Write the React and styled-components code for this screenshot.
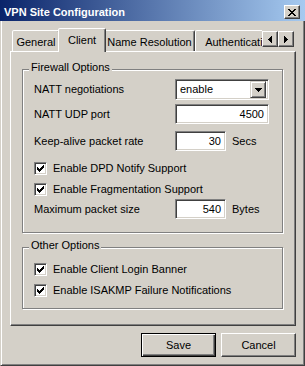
import React from 'react'
import styled, { createGlobalStyle } from 'styled-components'

const GlobalStyle = createGlobalStyle`
  html, body { margin: 0; padding: 0; background: #d4d0c8; }
  body {
    font-family: "Liberation Sans", Arial, sans-serif;
    font-size: 11px;
    color: #000;
  }
  * { box-sizing: border-box; }
`;

const Window = styled.div`
  width: 305px;
  height: 366px;
  display: flex;
  flex-direction: column;
  background: #d4d0c8;
  overflow: hidden;
`;

const TitleBar = styled.div`
  height: 21px;
  flex: none;
  display: flex;
  align-items: center;
  padding: 3px 5px 0 4px;
  background: linear-gradient(to right, #0a246a, #a6caf0);
`;

const Title = styled.div`
  flex: 1;
  color: #fff;
  font-weight: bold;
  line-height: 13px;
`;

const Raised = styled.div`
  display: flex;
  align-items: center;
  justify-content: center;
  background: #d4d0c8;
  border: 1px solid;
  border-color: #fff #404040 #404040 #fff;
  box-shadow: inset -1px -1px #808080;
`;

const CaptionButton = styled(Raised)`
  width: 16px;
  height: 14px;
`;

const Body = styled.div`
  flex: 1;
  display: flex;
  flex-direction: column;
  padding: 7px 8px 8px 9px;
  border-left: 1px solid #d4d0c8;
  border-right: 1px solid #404040;
  border-bottom: 1px solid #404040;
  box-shadow: inset 1px 0 #fff, inset -1px -1px #808080;
`;

const TabStrip = styled.div`
  height: 24px;
  flex: none;
  display: flex;
  position: relative;
  z-index: 1;
`;

const TabViewport = styled.div`
  flex: 1;
  display: flex;
  align-items: flex-end;
  overflow: hidden;
  padding-left: 2px;
`;

const Tab = styled.div`
  flex: none;
  width: ${p => p.$w + (p.$active ? 4 : 0)}px;
  height: ${p => (p.$active ? 24 : 21)}px;
  margin: ${p => (p.$active ? '0 -2px' : '0 0 1px 0')};
  position: relative;
  z-index: ${p => (p.$active ? 2 : 1)};
  padding-top: 5px;
  line-height: 13px;
  text-align: center;
  white-space: nowrap;
  background: #d4d0c8;
  border: 1px solid;
  border-bottom: none;
  border-color: #fff #404040 transparent #fff;
  border-radius: 2px 2px 0 0;
  box-shadow: inset -1px 0 #808080;
`;

const ScrollArrows = styled.div`
  flex: none;
  display: flex;
  margin: 3px 2px 0 0;
  align-self: flex-start;
`;

const ArrowButton = styled(Raised)`
  width: 16px;
  height: 16px;
`;

const TabPanel = styled.div`
  flex: 1;
  margin-top: -1px;
  display: flex;
  flex-direction: column;
  padding: 17px 12px 0 11px;
  border: 1px solid;
  border-color: #fff #404040 #404040 #fff;
  box-shadow: inset -1px -1px #808080;
`;

const GroupBox = styled.div`
  position: relative;
  display: flex;
  flex-direction: column;
  padding: ${p => p.$pad};
  margin-top: ${p => p.$mt || 0}px;
  border: 1px solid #808080;
  box-shadow: inset 1px 1px #fff, 1px 1px #fff;
`;

const Legend = styled.span`
  position: absolute;
  top: -9px;
  left: 6px;
  padding: 0 2px;
  line-height: 13px;
  background: #d4d0c8;
`;

const Row = styled.div`
  display: flex;
  align-items: center;
  height: ${p => p.$h}px;
  margin-top: ${p => p.$mt || 0}px;
  line-height: 13px;
`;

const Label = styled.span`
  width: 141px;
  flex: none;
`;

const Unit = styled.span`
  margin-left: 6px;
`;

const Sunken = styled.div`
  background: #fff;
  border: 1px solid;
  border-color: #808080 #fff #fff #808080;
  box-shadow: inset 1px 1px #404040, inset -1px -1px #d4d0c8;
`;

const TextField = styled(Sunken)`
  width: ${p => p.$w}px;
  height: 20px;
  padding: 0 4px;
  display: flex;
  align-items: center;
  justify-content: flex-end;
`;

const Combo = styled(Sunken)`
  width: 94px;
  height: 21px;
  padding: 2px;
  display: flex;
  align-items: center;
`;

const ComboText = styled.span`
  flex: 1;
  padding-left: 2px;
`;

const ComboButton = styled.div`
  width: 16px;
  height: 17px;
  display: flex;
  align-items: center;
  justify-content: center;
  background: #d4d0c8;
  border: 1px solid;
  border-color: #d4d0c8 #404040 #404040 #d4d0c8;
  box-shadow: inset 1px 1px #fff, inset -1px -1px #808080;
`;

const CheckRow = styled(Row)`
  gap: 6px;
`;

const CheckBox = styled(Sunken)`
  width: 13px;
  height: 13px;
  flex: none;
  display: flex;
  align-items: center;
  justify-content: center;
`;

const ButtonRow = styled.div`
  flex: none;
  display: flex;
  justify-content: flex-end;
  gap: 5px;
  margin-top: 7px;
`;

const PushButton = styled.div`
  width: 75px;
  height: 24px;
  display: flex;
  align-items: center;
  justify-content: center;
  background: #d4d0c8;
  border: 1px solid;
  border-color: ${p => (p.$default ? '#000' : '#fff #404040 #404040 #fff')};
  box-shadow: ${p =>
    p.$default
      ? 'inset 1px 1px #fff, inset -1px -1px #404040, inset -2px -2px #808080'
      : 'inset -1px -1px #808080'};
`;

const Pixels = ({ w, h, d }) => (
  <svg width={w} height={h} viewBox={`0 0 ${w} ${h}`} shapeRendering="crispEdges" style={{ display: 'block' }}>
    <path d={d} fill="#000" />
  </svg>
);

const CHECK = 'M0 2h1v3H0z M1 3h1v3H1z M2 4h1v3H2z M3 3h1v3H3z M4 2h1v3H4z M5 1h1v3H5z M6 0h1v3H6z';
const CROSS =
  'M0 0h2v1H0z M6 0h2v1H6z M1 1h2v1H1z M5 1h2v1H5z M2 2h4v1H2z M3 3h2v1H3z M2 4h4v1H2z M1 5h2v1H1z M5 5h2v1H5z M0 6h2v1H0z M6 6h2v1H6z';
const DOWN = 'M0 0h7v1H0z M1 1h5v1H1z M2 2h3v1H2z M3 3h1v1H3z';
const LEFT = 'M3 0h1v7H3z M2 1h1v5H2z M1 2h1v3H1z M0 3h1v1H0z';
const RIGHT = 'M0 0h1v7H0z M1 1h1v5H1z M2 2h1v3H2z M3 3h1v1H3z';

const Check = ({ label, mt }) => (
  <CheckRow $h={13} $mt={mt}>
    <CheckBox>
      <Pixels w={7} h={7} d={CHECK} />
    </CheckBox>
    <span>{label}</span>
  </CheckRow>
);

const tabs = [
  { name: 'General', w: 48 },
  { name: 'Client', w: 44, active: true },
  { name: 'Name Resolution', w: 91 },
  { name: 'Authentication', w: 90 },
];

export default function App() {
  return (
    <>
      <GlobalStyle />
      <Window>
        <TitleBar>
          <Title>VPN Site Configuration</Title>
          <CaptionButton>
            <Pixels w={8} h={7} d={CROSS} />
          </CaptionButton>
        </TitleBar>

        <Body>
          <TabStrip>
            <TabViewport>
              {tabs.map(t => (
                <Tab key={t.name} $w={t.w} $active={t.active}>
                  {t.name}
                </Tab>
              ))}
            </TabViewport>
            <ScrollArrows>
              <ArrowButton>
                <Pixels w={4} h={7} d={LEFT} />
              </ArrowButton>
              <ArrowButton>
                <Pixels w={4} h={7} d={RIGHT} />
              </ArrowButton>
            </ScrollArrows>
          </TabStrip>

          <TabPanel>
            <GroupBox $pad="9px 0 13px 11px">
              <Legend>Firewall Options</Legend>
              <Row $h={21}>
                <Label>NATT negotiations</Label>
                <Combo>
                  <ComboText>enable</ComboText>
                  <ComboButton>
                    <Pixels w={7} h={4} d={DOWN} />
                  </ComboButton>
                </Combo>
              </Row>
              <Row $h={20} $mt={4}>
                <Label>NATT UDP port</Label>
                <TextField $w={94}>4500</TextField>
              </Row>
              <Row $h={20} $mt={7}>
                <Label>Keep-alive packet rate</Label>
                <TextField $w={51}>30</TextField>
                <Unit>Secs</Unit>
              </Row>
              <Check label="Enable DPD Notify Support" mt={11} />
              <Check label="Enable Fragmentation Support" mt={8} />
              <Row $h={20} $mt={3}>
                <Label>Maximum packet size</Label>
                <TextField $w={51}>540</TextField>
                <Unit>Bytes</Unit>
              </Row>
            </GroupBox>

            <GroupBox $pad="15px 0 11px 11px" $mt={14}>
              <Legend>Other Options</Legend>
              <Check label="Enable Client Login Banner" />
              <Check label="Enable ISAKMP Failure Notifications" mt={8} />
            </GroupBox>
          </TabPanel>

          <ButtonRow>
            <PushButton $default>Save</PushButton>
            <PushButton>Cancel</PushButton>
          </ButtonRow>
        </Body>
      </Window>
    </>
  )
}
